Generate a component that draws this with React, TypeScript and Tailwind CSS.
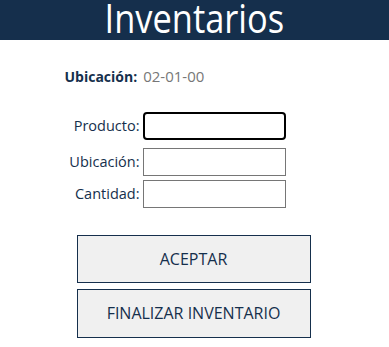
import React from 'react';

export default function App() {
    return (
        <div className="min-h-screen bg-white" style={{ fontFamily: '"Open Sans", "Noto Sans", sans-serif' }}>
            {/* Header */}
            <div className="h-10 bg-[#152f4c] flex items-start justify-center overflow-hidden">
                <h1 className="text-white text-[40px] leading-[35px] scale-x-[0.86]">Inventarios</h1>
            </div>

            <div className="w-[260px] mx-auto">
                {/* Ubicación actual */}
                <div className="mt-[25px] flex items-baseline gap-[6px]">
                    <span className="font-bold text-[14px] text-[#152f4c]">Ubicación:</span>
                    <span className="text-[15px] text-[#777777]">02-01-00</span>
                </div>

                {/* Form */}
                <div className="mt-[24px] flex flex-col">
                    <div className="flex items-center mb-[8px]">
                        <label className="w-[78px] pr-[3px] text-right text-[14.5px] text-[#152f4c]">Producto:</label>
                        <input
                            autoFocus
                            className="w-[143px] h-[28px] border-2 border-black rounded-[4px] px-1 outline-none"
                        />
                    </div>
                    <div className="flex items-center mb-[4px]">
                        <label className="w-[78px] pr-[3px] text-right text-[14.5px] text-[#152f4c]">Ubicación:</label>
                        <input className="w-[143px] h-[28px] border border-[#767676] px-1 outline-none" />
                    </div>
                    <div className="flex items-center">
                        <label className="w-[78px] pr-[3px] text-right text-[14.5px] text-[#152f4c]">Cantidad:</label>
                        <input className="w-[143px] h-[28px] border border-[#767676] px-1 outline-none" />
                    </div>
                </div>

                {/* Buttons */}
                <div className="ml-[12px] mt-[27px] w-[234px] flex flex-col gap-[6px]">
                    <button className="h-[48px] bg-[#f0f0f0] border border-[#152f4c] text-[16px] text-[#152f4c]">
                        ACEPTAR
                    </button>
                    <button className="h-[49px] bg-[#f0f0f0] border border-[#152f4c] text-[16px] text-[#152f4c]">
                        FINALIZAR INVENTARIO
                    </button>
                </div>
            </div>
        </div>
    );
}
